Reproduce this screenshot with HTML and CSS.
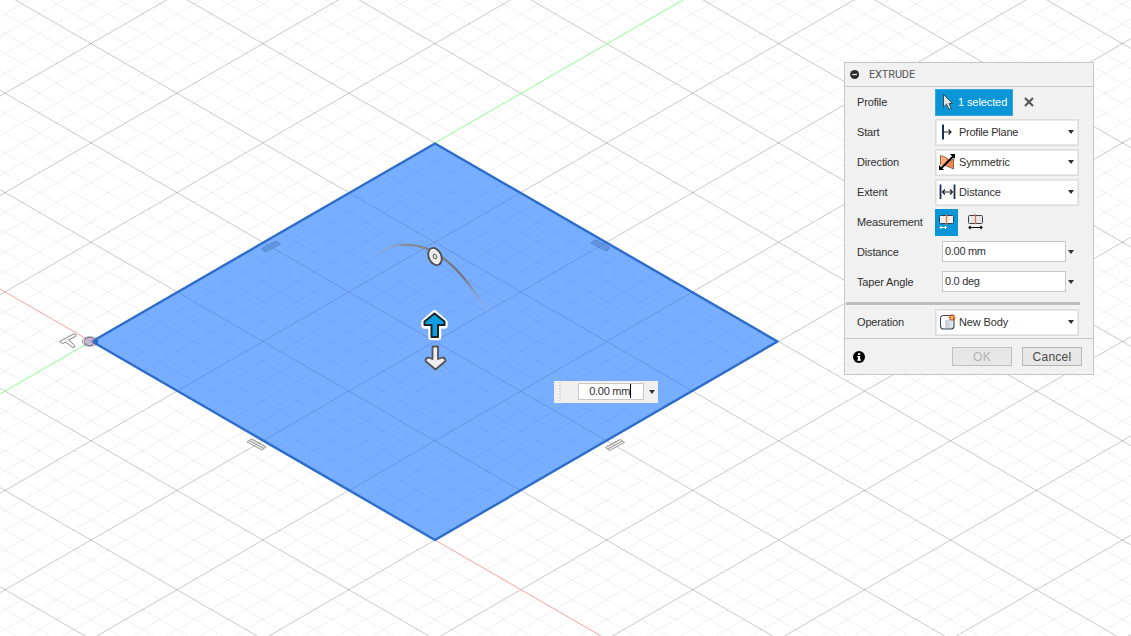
FILE: index.html
```html
<!DOCTYPE html>
<html lang="en">
<head>
<meta charset="utf-8">
<title>Extrude</title>
<link rel="stylesheet" href="styles.css">
</head>
<body>
<main class="viewport">
  <svg class="scene" width="1131" height="636" viewBox="0 0 1131 636">
    <defs>
      <clipPath id="face"><path d="M91 341.5L435 143L778.5 341.5L435 540Z"/></clipPath>
      <linearGradient id="arcFade" gradientUnits="userSpaceOnUse" x1="377" y1="252" x2="487" y2="310">
        <stop offset="0" stop-color="#999" stop-opacity="0"/><stop offset=".2" stop-color="#777"/>
        <stop offset=".7" stop-color="#606060"/><stop offset="1" stop-color="#999" stop-opacity="0"/>
      </linearGradient>
      <g id="grid"><path class="minor" id="minor"/><path class="major" id="major"/></g>
      <g id="parallel"><path d="M-9.5 2.5L5.5-5.500L9.5-2.5L-5.5 5.500Z"/><path d="M-7.500 4L7.500-4" /><path class="dots" d="M-8 1.200L5-6"/></g>
    </defs>
    <use href="#grid"/>
    <path class="axis-x" d="M0 289L91 341.5M435 540L601 636"/>
    <path class="axis-y" d="M0 394L91 341.5M435 143L683 0"/>
    <path class="fill" d="M91 341.5L435 143L778.5 341.5L435 540Z"/>
    <g clip-path="url(#face)" class="inside"><use href="#grid"/></g>
    <path class="edge" d="M92 341.5L435 143.5L777.500 341.500L435 540Z"/>
    <g class="origin"><ellipse cx="90" cy="341.500" rx="8" ry="4.800"/><ellipse class="core" cx="89.500" cy="341.500" rx="5" ry="4.200"/></g>
    <path class="corner" d="M98 338L92 341.500L98 345Z"/>
    <path class="perp" d="M59.500 341.500L73 334.300Q77 333 75.800 336.300L68.500 340L74.500 345Q75.500 348 72.500 347.500L65.800 342.200L62.500 343.500Z"/>
    <g class="constraint blue"><use href="#parallel" x="271" y="246.500"/><use href="#parallel" transform="translate(600.500 245.500) scale(-1 1)"/></g>
    <g class="constraint"><use href="#parallel" x="615" y="445"/><use href="#parallel" transform="translate(256.500 444.500) scale(-1 1)"/></g>
    <path class="arc" d="M377 254Q392 243 411 245Q450 248 488 313"/>
    <path class="arc-light" d="M377 254Q392 243 411 245Q450 248 488 313"/>
    <g transform="rotate(-24 435 256.500)"><ellipse class="knob" cx="435" cy="256.500" rx="6.200" ry="9"/><ellipse class="hub" cx="435" cy="256.500" rx="1.600" ry="2.200"/></g>
    <path class="up-halo" d="M434.500 313.500L444.500 322.500V325.500H438V337H431.500V325.500H424.500V322.500Z"/>
    <path class="up" d="M434.500 313.500L444.500 321.500V325H438V337H431.500V325H424.500V321.500Z"/>
    <path class="down" d="M432.500 346.500H438V359L442.500 357.500Q445.500 358 445.500 361L435.500 369.500L425.500 361Q425.500 358 428.500 357.500L432.500 359Z"/>
  </svg>

  <div class="float-input">
    <svg class="grip" width="3" height="20"><path d="M.5 0V20"/><path d="M1.500 1.500V20"/></svg>
    <span class="float-field">0.00 mm<i class="caret"></i></span>
    <i class="arrow"></i>
  </div>

  <section class="panel">
    <header class="head"><svg width="10" height="10"><circle cx="4.600" cy="4.500" r="4.500" fill="#2d2d2d"/><path d="M2.200 4.500H7" stroke="#f1f1f1" stroke-width="1.200"/></svg><span class="title">EXTRUDE</span></header>
    <div class="rows">
      <div class="row"><label>Profile</label>
        <button class="selected"><svg width="12" height="18"><path d="M1.500 1.500V14L4.500 11.200L7 16.300L9.200 15.300L7 10.500H10.500Z" fill="#e4e4e4" stroke="#404850"/></svg>1 selected</button>
        <svg class="clear" width="10" height="10"><path d="M1 1L9 9M9 1L1 9" stroke="#555" stroke-width="2.100"/></svg></div>
      <div class="row"><label>Start</label><div class="select"><svg width="18" height="18"><path d="M4 1.500V16.500" stroke="#18305c" stroke-width="2"/><path d="M4 9H12.500M9.500 6.500L12 9L9.500 11.500" fill="none" stroke="#222" stroke-width="1.200"/></svg><span>Profile Plane</span><i class="arrow"></i></div></div>
      <div class="row"><label>Direction</label><div class="select"><svg width="18" height="18"><path d="M1.500 2.500L7 4.500L11 8L14.500 6V16L8 13L1.500 11.500Z" fill="#f08a50" stroke="#7b4027" stroke-width=".8"/><path d="M2 3L7 5V9L2 13Z" fill="#ffad78"/><path d="M2 15.500L14.500 3" stroke="#000" stroke-width="1.800"/><path d="M16 1V6L11 1ZM0 17V12L5 17Z" fill="#000"/></svg><span>Symmetric</span><i class="arrow"></i></div></div>
      <div class="row"><label>Extent</label><div class="select"><svg width="18" height="18"><path d="M1.500 1.500V16M15.500 1.500V16" stroke="#18305c" stroke-width="1.800"/><path d="M3.500 9H13.500M6 6.500L3.500 9L6 11.500M11 6.500L13.500 9L11 11.500" fill="none" stroke="#222" stroke-width="1.200"/></svg><span>Distance</span><i class="arrow"></i></div></div>
      <div class="row"><label>Measurement</label><div class="measures">
        <span class="measure on"><svg width="18" height="18"><rect x="1.500" y="2.500" width="14" height="8" rx="1" fill="#eee" stroke="#244563"/><path d="M8.500 1V12" stroke="#ef7034" stroke-width="1.300"/><path d="M2 14.500H8.500M3.500 13L2 14.500L3.500 16M7 13L8.500 14.500L7 16" fill="none" stroke="#fff"/></svg></span>
        <span class="measure"><svg width="18" height="18"><rect x="1.500" y="2.500" width="14" height="8" rx="1" fill="#e5e7eb" stroke="#3c4249"/><path d="M8.500 1V11" stroke="#ef7034" stroke-width="1.300"/><path d="M1.500 14.500H15.500M3.500 13L2 14.500L3.500 16M13.500 13L15 14.500L13.500 16" fill="none" stroke="#000" stroke-width="1.100"/></svg></span></div></div>
      <div class="row"><label>Distance</label><div class="value">0.00 mm</div><i class="arrow"></i></div>
      <div class="row"><label>Taper Angle</label><div class="value">0.0 deg</div><i class="arrow"></i></div>
    </div>
    <div class="separator"></div>
    <div class="row operation"><label>Operation</label><div class="select"><svg width="20" height="18"><defs><linearGradient id="metal"><stop stop-color="#fff"/><stop offset=".3" stop-color="#fff"/><stop offset=".4" stop-color="#c3cbd6"/><stop offset="1" stop-color="#eef0f3"/></linearGradient></defs><path d="M1.500 5Q2 2.500 5 2.500H12Q15 2.500 15 5V13Q15 16 12 16H5Q1.500 16 1.500 13Z" fill="url(#metal)" stroke="#3c4651" stroke-width="1.100"/><ellipse cx="8" cy="5" rx="6" ry="2" fill="#fff"/><path d="M13 1V8M9.500 4.500H16.500M10.500 2L15.500 7M15.500 2L10.500 7" stroke="#d54118" stroke-width="1.100"/><circle cx="13" cy="4.500" r="1.400" fill="#ffdc45"/></svg><span>New Body</span><i class="arrow"></i></div></div>
    <footer class="foot">
      <svg width="12" height="12"><circle cx="6" cy="6" r="6"/><path d="M5 2.300H7.200V4.100H5ZM4.200 5H7.200V8.500H8V9.700H4.200V8.500H5V6.200H4.200Z" fill="#fff"/></svg>
      <button class="btn disabled">OK</button><button class="btn">Cancel</button>
    </footer>
  </section>
</main>
<script src="grid.js"></script>
</body>
</html>
```
FILE: styles.css
```css
* { box-sizing: border-box; }
body { margin: 0; font-family: "Liberation Sans", Arial, sans-serif; font-size: 11px; color: #303030; }
.viewport { position: relative; width: 1131px; height: 636px; overflow: hidden; background: #fff; }
.scene { display: block; }
.minor, .major { fill: none; }
.minor { stroke: rgba(0, 0, 0, .06); stroke-width: 1; }
.major { stroke: rgba(0, 0, 0, .21); stroke-width: 1; }
.inside { opacity: .62; }
.axis-x { stroke: #ff9f9f; fill: none; }
.axis-y { stroke: #8dff8d; fill: none; }
.fill { fill: #78aeff; }
.edge { fill: none; stroke: #2d6dca; stroke-width: 2.400; stroke-linejoin: round; }
.origin { fill: rgba(125, 115, 150, .25); stroke: rgba(70, 70, 80, .4); }
.origin .core { fill: rgba(190, 165, 205, .6); stroke: rgba(60, 60, 80, .6); }
.corner { fill: #2d6dca; }
.perp { fill: #f5f5f5; stroke: #888; }
.constraint { fill: rgba(225, 225, 225, .7); stroke: #858585; stroke-width: .8; }
.constraint.blue { fill: rgba(100, 150, 225, .5); stroke: #4a79bb; }
.dots { stroke-dasharray: 1.500 1.500; }
.arc { fill: none; stroke: url(#arcFade); stroke-width: 2; }
.arc-light { fill: none; stroke: #bbb; stroke-width: .7; opacity: .6; }
.knob { fill: #eee; stroke: #4d4d4d; stroke-width: 1.800; }
.hub { fill: #eee; stroke: #555; }
.up-halo { fill: #fff; stroke: #fff; stroke-width: 6.500; stroke-linejoin: round; }
.up { fill: #0b9fe2; stroke: #14252e; stroke-width: 2; stroke-linejoin: round; }
.down { fill: #eee; stroke: #555; stroke-width: 1.800; stroke-linejoin: round; }

.arrow { width: 0; height: 0; border: 3.500px solid transparent; border-top: 4px solid #303030; border-bottom: 0; flex: none; }
.float-input { position: absolute; left: 554px; top: 381px; width: 104px; height: 22px; background: #f0f0f0; display: flex; align-items: center; padding: 0 3px 0 5px; }
.grip { stroke: #c8c8c8; stroke-dasharray: 1 2; }
.float-field { margin: 0 0 1px 16px; width: 66px; height: 17px; background: #fff; border: 1px solid #c8c8c8; display: flex; align-items: center; justify-content: flex-end; padding: 0 12px 1px 0; white-space: nowrap; letter-spacing: -.3px; }
.caret { width: 1px; height: 14px; background: #000; }
.float-input .arrow { margin-left: auto; }

.panel { position: absolute; left: 844px; top: 62px; width: 250px; height: 313px; background: #f1f1f1; border: 1px solid #c6c6c6; }
.head { height: 24px; display: flex; align-items: center; gap: 9px; padding-left: 5px; border-bottom: 1px solid #c9c9c9; color: #555; }
.title { font-family: Roboto, sans-serif; letter-spacing: -.15px; }
.row { height: 30px; display: flex; align-items: center; padding-left: 12px; }
.row label { width: 78px; flex: none; letter-spacing: -.15px; white-space: nowrap; }
.select { width: 144px; height: 27px; background: #fff; border: 1px solid #dcdcdc; outline: 1px solid #e9e9e9; outline-offset: -2px; display: flex; align-items: center; padding: 0 4px 0 3px; }
.select svg { width: 18px; flex: none; overflow: visible; }
.select span { flex: 1; margin-left: 2px; letter-spacing: -.25px; }
.row:nth-child(3) .select span, .row:nth-child(4) .select span { letter-spacing: -.12px; }
.operation .select span { letter-spacing: .1px; }
.selected { width: 78px; height: 27px; border: 1px solid #36a7df; background: #0896d8; color: #fff; font: inherit; letter-spacing: -.1px; padding: 0 0 0 6px; display: flex; align-items: center; gap: 4px; white-space: nowrap; }
.clear { margin-left: 11px; }
.measures { display: flex; gap: 6px; }
.measure { width: 23px; height: 27px; display: flex; align-items: center; justify-content: center; }
.measure.on { background: #0896d8; }
.value { width: 124px; height: 21px; margin: 0 2px 1px 7px; background: #fff; border: 1px solid #c8c8c8; padding: 0 2px; line-height: 19px; letter-spacing: -.3px; }
.separator { height: 3px; margin: 4.500px 13px 0 1px; background: #bebebe; }
.operation { height: 32px; margin-top: 1.500px; }
.foot { height: 36px; border-top: 1px solid #c9c9c9; display: flex; align-items: center; padding: 0 11px 0 8px; margin-top: 0; }
.btn { width: 60px; height: 19px; padding: 0; background: #e7e7e7; border: 1px solid #b5b5b5; font: 12px "Liberation Sans", sans-serif; letter-spacing: .25px; color: #4a4a4a; margin-left: 10px; }
.btn.disabled { margin-left: auto; color: #b3b3b3; border-color: #bebebe; }
```
FILE: grid.js
```js
// Isometric sketch grid: five minor divisions per major cell
const OX = 91, OY = 341.5, DX = 17.19, DY = 9.93;
let minor = "", major = "";
for (let i = -90; i <= 90; i++) {
  const k = 90;
  const seg =
    `M${OX + (i - k) * DX} ${OY + (i + k) * DY}L${OX + (i + k) * DX} ${OY + (i - k) * DY}` +
    `M${OX + (i - k) * DX} ${OY - (i + k) * DY}L${OX + (i + k) * DX} ${OY + (k - i) * DY}`;
  if (i % 5 === 0) { if (i !== 0) major += seg; }
  else minor += seg;
}
document.getElementById("minor").setAttribute("d", minor);
document.getElementById("major").setAttribute("d", major);
```
